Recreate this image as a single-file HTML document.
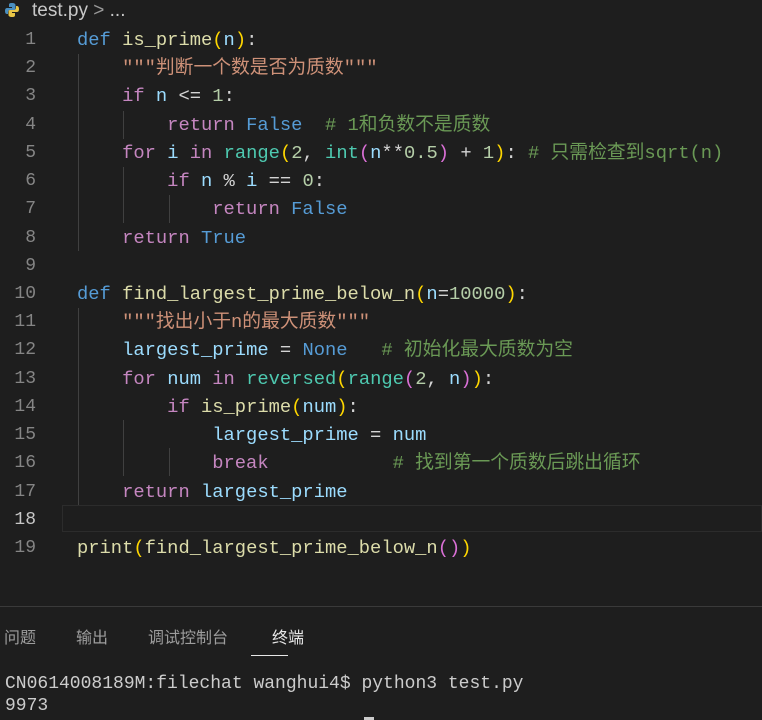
<!DOCTYPE html>
<html><head><meta charset="utf-8"><style>
body{margin:0;width:762px;height:720px;background:#1e1e1e;overflow:hidden;position:relative;font-family:"Liberation Mono","Noto Sans CJK SC",monospace;}
.hd{position:absolute;left:32px;top:0px;font:19px "Liberation Sans",sans-serif;color:#c8c8c8;}
.ln{position:absolute;left:0;width:36px;text-align:right;font-size:18px;line-height:28px;color:#858585;}
.cl{position:absolute;left:77px;font-size:18.8px;line-height:28px;height:28px;color:#d4d4d4;white-space:pre;}
.cl span{line-height:28px;}
.k{color:#569cd6}.f{color:#dcdcaa}.p{color:#9cdcfe}.s{color:#ce9178}.c{color:#c586c0}.n{color:#b5cea8}.m{color:#6a9955}.b{color:#4ec9b0}.y{color:#ffd700}.pu{color:#da70d6}.bl{color:#179fff}
.g{position:absolute;width:1px;background:#404040;}
.tab{position:absolute;top:624px;font:16px "Liberation Sans","Noto Sans CJK SC",sans-serif;color:#9d9d9d;}
.t{position:absolute;left:5px;font-size:18px;color:#cccccc;white-space:pre;}
</style></head><body>
<svg style="position:absolute;left:4px;top:2px" width="16" height="16" viewBox="0 0 16 16"><path d="M8 1C5 1 5 2 5 3v2h3v1H3C1.5 6 1 7.5 1 9s.5 3 2 3h1v-2c0-1 1-2 2-2h4c1 0 1.5-.5 1.5-1.5V3c0-1-1-2-3.5-2z" fill="#4a8fc0"/><path d="M8 15c3 0 3-1 3-2v-2H8v-1h5c1.5 0 2-1.5 2-3s-.5-3-2-3h-1v2c0 1-1 2-2 2H6c-1 0-1.5.5-1.5 1.5V13c0 1 1 2 3.5 2z" fill="#e8c547"/></svg>
<div class="hd">test.py <span style="color:#999">&gt;</span> ...</div>
<div style="position:absolute;left:62px;top:505px;width:700px;height:27px;border:1px solid #2c2c2c;box-sizing:border-box"></div>
<div class="g" style="left:78px;top:54px;height:197px"></div>
<div class="g" style="left:123px;top:111px;height:28px"></div>
<div class="g" style="left:123px;top:167px;height:56px"></div>
<div class="g" style="left:169px;top:195px;height:28px"></div>
<div class="g" style="left:78px;top:308px;height:197px"></div>
<div class="g" style="left:123px;top:420px;height:56px"></div>
<div class="g" style="left:169px;top:448px;height:28px"></div>
<div id="code"></div>
<div style="position:absolute;left:0;top:606px;width:762px;height:1px;background:#3a3a3a"></div>
<div class="tab" style="left:4px">问题</div>
<div class="tab" style="left:76px">输出</div>
<div class="tab" style="left:148px">调试控制台</div>
<div class="tab" style="left:272px;color:#e7e7e7">终端</div>
<div style="position:absolute;left:251px;top:655px;width:37px;height:1px;background:#e7e7e7"></div>
<div class="t" style="top:674px">CN0614008189M:filechat wanghui4$ python3 test.py</div>
<div class="t" style="top:696px">9973</div>
<div style="position:absolute;left:364px;top:717px;width:10px;height:3px;background:#ccc"></div>
<script>
var L=[
'<span class="k">def</span> <span class="f">is_prime</span><span class="y">(</span><span class="p">n</span><span class="y">)</span>:',
'    <span class="s">"""判断一个数是否为质数"""</span>',
'    <span class="c">if</span> <span class="p">n</span> &lt;= <span class="n">1</span>:',
'        <span class="c">return</span> <span class="k">False</span>  <span class="m"># 1和负数不是质数</span>',
'    <span class="c">for</span> <span class="p">i</span> <span class="c">in</span> <span class="b">range</span><span class="y">(</span><span class="n">2</span>, <span class="b">int</span><span class="pu">(</span><span class="p">n</span>**<span class="n">0.5</span><span class="pu">)</span> + <span class="n">1</span><span class="y">)</span>: <span class="m"># 只需检查到sqrt(n)</span>',
'        <span class="c">if</span> <span class="p">n</span> % <span class="p">i</span> == <span class="n">0</span>:',
'            <span class="c">return</span> <span class="k">False</span>',
'    <span class="c">return</span> <span class="k">True</span>',
'',
'<span class="k">def</span> <span class="f">find_largest_prime_below_n</span><span class="y">(</span><span class="p">n</span>=<span class="n">10000</span><span class="y">)</span>:',
'    <span class="s">"""找出小于n的最大质数"""</span>',
'    <span class="p">largest_prime</span> = <span class="k">None</span>   <span class="m"># 初始化最大质数为空</span>',
'    <span class="c">for</span> <span class="p">num</span> <span class="c">in</span> <span class="b">reversed</span><span class="y">(</span><span class="b">range</span><span class="pu">(</span><span class="n">2</span>, <span class="p">n</span><span class="pu">)</span><span class="y">)</span>:',
'        <span class="c">if</span> <span class="f">is_prime</span><span class="y">(</span><span class="p">num</span><span class="y">)</span>:',
'            <span class="p">largest_prime</span> = <span class="p">num</span>',
'            <span class="c">break</span>           <span class="m"># 找到第一个质数后跳出循环</span>',
'    <span class="c">return</span> <span class="p">largest_prime</span>',
'',
'<span class="f">print</span><span class="y">(</span><span class="f">find_largest_prime_below_n</span><span class="pu">()</span><span class="y">)</span>'];
var h='';for(var i=0;i<L.length;i++){var t=26+i*28.22;h+='<div class="ln" style="top:'+t+'px;'+(i==17?'color:#c6c6c6':'')+'">'+(i+1)+'</div><div class="cl" style="top:'+t+'px">'+L[i]+'</div>';}
document.getElementById('code').innerHTML=h;
</script>
</body></html>
